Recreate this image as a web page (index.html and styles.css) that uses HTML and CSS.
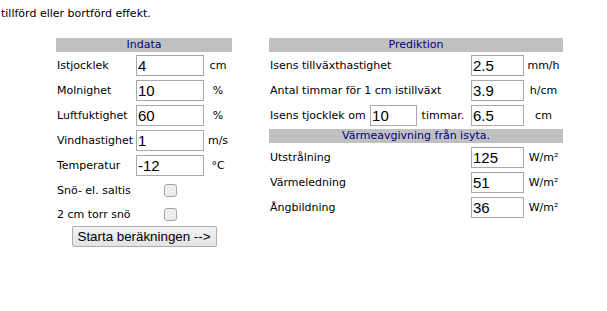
FILE: index.html
```html
<!DOCTYPE html>
<html lang="sv">
<head>
  <meta charset="UTF-8">
  <title>Isberäkning</title>
  <link rel="stylesheet" href="styles.css">
</head>
<body>

  <p class="intro">tillförd eller bortförd effekt.</p>

  <div class="panels">
    <form class="panel indata">
      <div class="bar">Indata</div>
      <div class="rows">
        <span class="label">Istjocklek</span><input class="field" type="text" value="4"><span class="unit">cm</span>
        <span class="label">Molnighet</span><input class="field" type="text" value="10"><span class="unit">%</span>
        <span class="label">Luftfuktighet</span><input class="field" type="text" value="60"><span class="unit">%</span>
        <span class="label">Vindhastighet</span><input class="field" type="text" value="1"><span class="unit">m/s</span>
        <span class="label">Temperatur</span><input class="field" type="text" value="-12"><span class="unit">°C</span>
        <span class="label">Snö- el. saltis</span><input class="check" type="checkbox"><span></span>
        <span class="label">2 cm torr snö</span><input class="check" type="checkbox"><span></span>
        <div class="actions">
          <button type="button" class="start">Starta beräkningen --&gt;</button>
        </div>
      </div>
    </form>

    <div class="panel prediction">
      <div class="bar">Prediktion</div>
      <div class="rows">
        <span class="label">Isens tillväxthastighet</span><input class="field" type="text" value="2.5"><span class="unit">mm/h</span>
        <span class="label">Antal timmar för 1 cm istillväxt</span><input class="field" type="text" value="3.9"><span class="unit">h/cm</span>
        <span class="label">Isens tjocklek om <input class="field small" type="text" value="10"> timmar.</span><input class="field" type="text" value="6.5"><span class="unit">cm</span>
      </div>
      <div class="bar second">Värmeavgivning från isyta.</div>
      <div class="rows">
        <span class="label">Utstrålning</span><input class="field" type="text" value="125"><span class="unit">W/m²</span>
        <span class="label">Värmeledning</span><input class="field" type="text" value="51"><span class="unit">W/m²</span>
        <span class="label">Ångbildning</span><input class="field" type="text" value="36"><span class="unit">W/m²</span>
      </div>
    </div>
  </div>

</body>
</html>
```

FILE: styles.css
```css
body {
  margin: 0;
  font-family: 'DejaVu Sans', Verdana, sans-serif;
  font-size: 11px;
  color: #000;
  background: #fff;
}
.intro {
  margin: 0;
  padding: 7px 0 0 1px;
  line-height: 13px;
}
.panels {
  display: flex;
  align-items: flex-start;
  gap: 37px;
  margin-top: 18px;
  padding-left: 56px;
}
.panel {
  margin: 0;
}
.bar {
  height: 14px;
  line-height: 14px;
  margin-bottom: 1px;
  text-align: center;
  background: #c0c0c0;
  color: #000080;
}
.bar.second {
  margin-top: 1px;
  margin-bottom: 2px;
}
.rows {
  display: grid;
  grid-auto-rows: 25px;
  align-items: center;
}
.indata {
  width: 176px;
}
.indata .rows {
  grid-template-columns: 80px 68px 28px;
  grid-template-rows: repeat(5, 25px) 24px 24px auto;
}
.prediction {
  width: 294px;
}
.prediction .rows {
  grid-template-columns: 202px 53px 39px;
}
.label {
  padding-left: 1px;
  white-space: nowrap;
}
.unit {
  text-align: center;
}
.field {
  box-sizing: border-box;
  width: 100%;
  height: 21px;
  margin: 0;
  padding: 0 1px;
  border: 1px solid #a9a9a9;
  font-family: 'Liberation Sans', Arial, sans-serif;
  font-size: 15px;
  color: #000;
  background: #fff;
}
.field.small {
  width: 47px;
  vertical-align: middle;
  margin: 0 1px;
}
.check {
  appearance: none;
  -webkit-appearance: none;
  justify-self: center;
  width: 13px;
  height: 13px;
  margin: 0;
  border: 1px solid #a6a6a6;
  border-radius: 3px;
  background: #ededed;
}
.actions {
  grid-column: 1 / -1;
  display: flex;
  justify-content: center;
}
.start {
  width: 145px;
  height: 21px;
  padding: 0;
  border: 1px solid #adadad;
  border-radius: 2px;
  background: linear-gradient(#f2f2f2, #e3e3e3);
  font-family: 'Liberation Sans', Arial, sans-serif;
  font-size: 13.33px;
  color: #000;
}
```
